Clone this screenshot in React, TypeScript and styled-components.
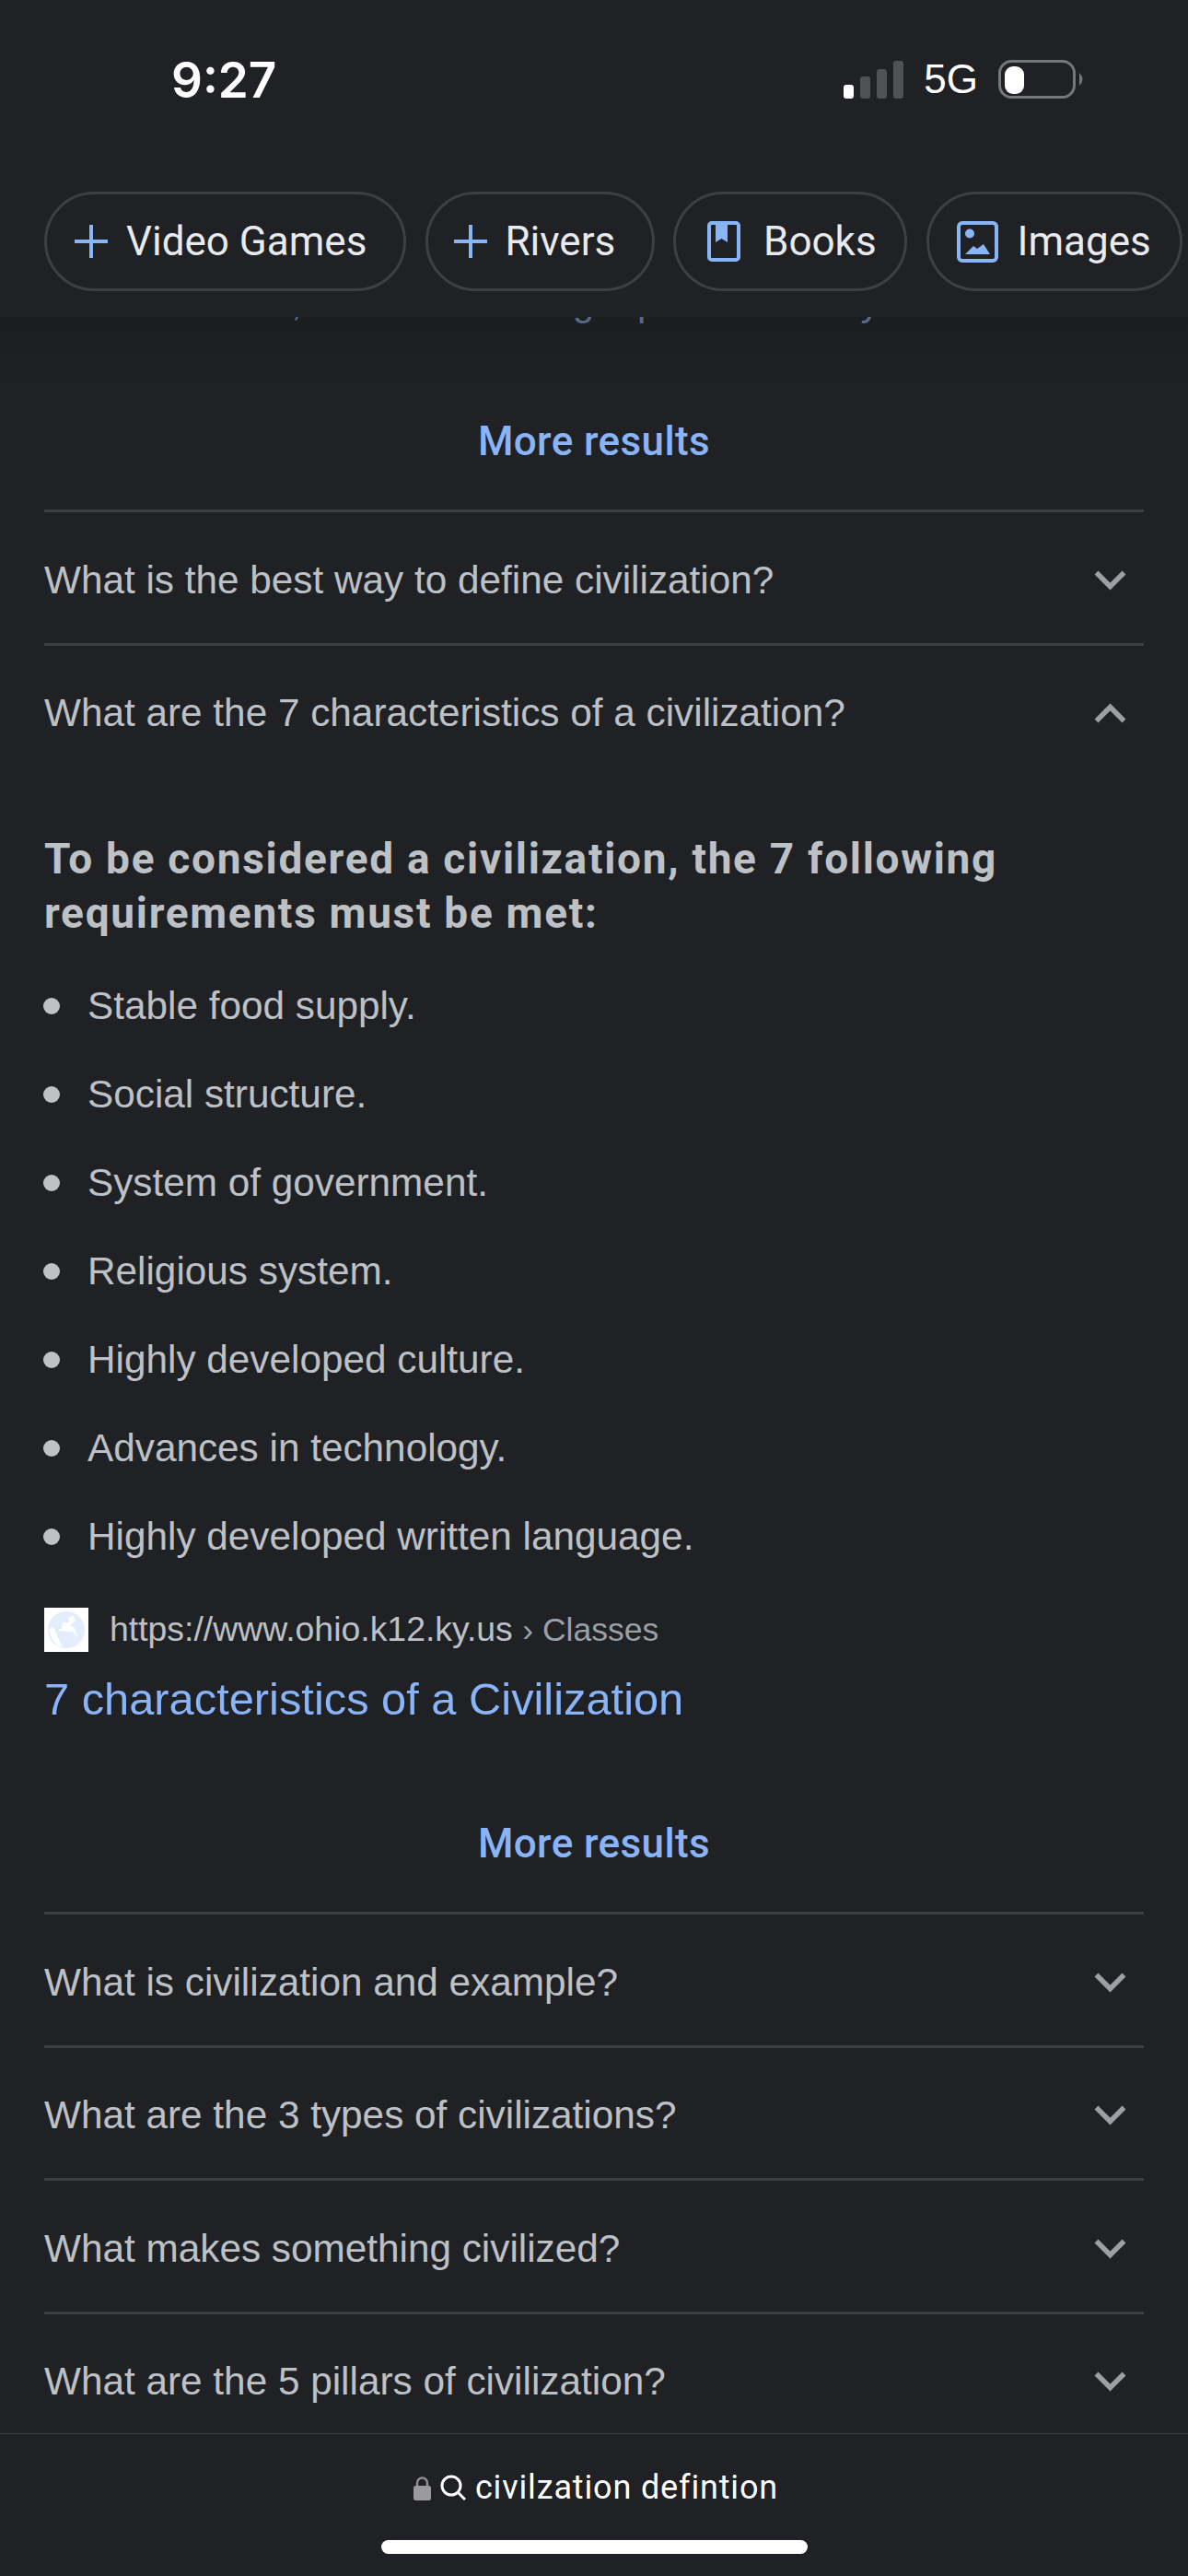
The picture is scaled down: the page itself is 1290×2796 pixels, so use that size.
import React from 'react'
import styled, { createGlobalStyle } from 'styled-components'

const GlobalStyle = createGlobalStyle`
  html, body {
    margin: 0;
    padding: 0;
    background: #202124;
  }
  * {
    box-sizing: border-box;
  }
`

const Page = styled.div`
  width: 1290px;
  height: 2796px;
  display: flex;
  flex-direction: column;
  overflow: hidden;
  background: #202124;
  font-family: 'Liberation Sans', Arial, sans-serif;
`

const Header = styled.header`
  height: 344px;
  flex: none;
  background: #202124;
`

const StatusBar = styled.div`
  height: 208px;
  display: flex;
  justify-content: space-between;
  align-items: flex-start;
  padding: 58px 113px 0 186px;
`

const Clock = styled.div`
  font-family: 'Inter', sans-serif;
  font-weight: 600;
  font-size: 53px;
  line-height: 58px;
  color: #fff;
`

const StatusIcons = styled.div`
  display: flex;
  align-items: center;
  gap: 22px;
  margin-top: 7px;
`

const NetworkLabel = styled.span`
  font-size: 44px;
  line-height: 42px;
  color: #fff;
`

const ChipRow = styled.div`
  display: flex;
  gap: 20.5px;
  padding-left: 48px;
`

const Chip = styled.div<{ $width: number; $pad: number; $gap: number }>`
  width: ${(p) => p.$width}px;
  height: 108px;
  flex: none;
  display: flex;
  align-items: center;
  gap: ${(p) => p.$gap}px;
  padding-left: ${(p) => p.$pad}px;
  border: 3px solid #3c4043;
  border-radius: 54px;
  font-family: 'Roboto', sans-serif;
  font-size: 44px;
  color: #e8eaed;
`

const Content = styled.main`
  flex: 1;
  min-height: 0;
  background: linear-gradient(#1c1d1f, #202124 80px);
`

const CutLine = styled.div`
  height: 7px;
  overflow: hidden;
  display: flex;
  align-items: flex-end;
  padding-left: 316px;
  font-size: 42px;
  line-height: 46px;
  color: #56698d;
`

const CutGlyph = styled.span<{ $offset: number }>`
  margin-left: ${(p) => p.$offset}px;
`

const Section = styled.div`
  padding: 0 48px;
`

const MoreResults = styled.div`
  height: 202px;
  display: flex;
  justify-content: center;
  align-items: flex-end;
  padding-bottom: 48px;
  font-family: 'Roboto', sans-serif;
  font-size: 44px;
  line-height: 52px;
  font-weight: 500;
  letter-spacing: 0.4px;
  color: #8ab4f8;
`

const Row = styled.div`
  height: 144.5px;
  display: flex;
  justify-content: space-between;
  align-items: center;
  padding: 6px 19px 0 0;
  border-top: 3px solid #3c4043;
  font-size: 42.3px;
  color: #bdc1c6;
`

const Answer = styled.div`
  padding-top: 61px;
`

const AnswerTitle = styled.h3`
  margin: 0 0 22.5px;
  font-family: 'Roboto', sans-serif;
  font-weight: 700;
  font-size: 46px;
  line-height: 59px;
  letter-spacing: 1.7px;
  color: #bdc1c6;
`

const BulletList = styled.ul`
  margin: 0;
  padding: 0;
  list-style: none;
`

const Bullet = styled.li`
  height: 96px;
  display: flex;
  align-items: center;
  gap: 30px;
  font-size: 42.3px;
  color: #bdc1c6;

  &::before {
    content: '';
    width: 18px;
    height: 18px;
    margin-left: -1px;
    border-radius: 50%;
    background: #bdc1c6;
  }
`

const SourceLine = styled.div`
  display: flex;
  align-items: center;
  gap: 23px;
  margin-top: 29px;
  font-size: 37.4px;
  color: #bdc1c6;
`

const Favicon = styled.div`
  width: 48px;
  height: 48px;
  display: flex;
  align-items: center;
  justify-content: center;
  background: #fff;
`

const Crumb = styled.span`
  font-size: 35.5px;
  color: #9aa0a6;
`

const ResultLink = styled.div`
  margin-top: 22.5px;
  font-size: 48.8px;
  line-height: 58px;
  color: #8ab4f8;
`

const BottomBar = styled.footer`
  height: 155px;
  flex: none;
  display: flex;
  flex-direction: column;
  align-items: center;
  padding-top: 35px;
  background: #202124;
  border-top: 1px solid #3c4043;
`

const AddressLine = styled.div`
  display: flex;
  align-items: center;
  gap: 10px;
  padding-left: 4px;
  font-family: 'Roboto', sans-serif;
  font-size: 36px;
  line-height: 46px;
  letter-spacing: 0.85px;
  color: #fff;
`

const HomeIndicator = styled.div`
  width: 463px;
  height: 15px;
  margin-top: 34px;
  border-radius: 8px;
  background: #fff;
`

function SignalIcon() {
  return (
    <svg width="65" height="41" viewBox="0 0 65 41">
      <rect x="0" y="26" width="11" height="15" rx="3" fill="#fff" />
      <rect x="18" y="17" width="11" height="24" rx="3" fill="#505154" />
      <rect x="36" y="9" width="11" height="32" rx="3" fill="#505154" />
      <rect x="54" y="0" width="11" height="41" rx="3" fill="#505154" />
    </svg>
  )
}

function BatteryIcon() {
  return (
    <svg width="93" height="42" viewBox="0 0 93 42">
      <rect x="1.5" y="1.5" width="81" height="39" rx="13" fill="none" stroke="#76777a" strokeWidth="3" />
      <rect x="7" y="7" width="21" height="30" rx="9" fill="#fff" />
      <path d="M88 14 Q95 21 88 28 Z" fill="#76777a" />
    </svg>
  )
}

function PlusIcon() {
  return (
    <svg width="36" height="36" viewBox="0 0 36 36">
      <path d="M18 0v36M0 18h36" stroke="#8ab4f8" strokeWidth="4" fill="none" />
    </svg>
  )
}

function BookIcon() {
  return (
    <svg width="36" height="44" viewBox="0 0 36 44">
      <rect x="2" y="2" width="32" height="40" rx="3" fill="none" stroke="#8ab4f8" strokeWidth="4" />
      <path d="M9 2h13v21l-6.500-4-6.500 4z" fill="#8ab4f8" />
    </svg>
  )
}

function ImageIcon() {
  return (
    <svg width="45" height="45" viewBox="0 0 45 45">
      <rect x="2" y="2" width="41" height="41" rx="4" fill="none" stroke="#8ab4f8" strokeWidth="4" />
      <circle cx="14" cy="13.500" r="5" fill="#8ab4f8" />
      <path d="M9 36l9-9 4 3 7-5 7 11z" fill="#8ab4f8" />
    </svg>
  )
}

function Chevron({ up }: { up?: boolean }) {
  return (
    <svg width="35" height="22" viewBox="0 0 35 22">
      <path
        d={up ? 'M2.500 19.500L17.500 4.500l15 15' : 'M2.500 2.500l15 15 15-15'}
        fill="none"
        stroke="#9aa0a6"
        strokeWidth="5.500"
      />
    </svg>
  )
}

function GlobeIcon() {
  return (
    <svg width="40" height="40" viewBox="0 0 40 40">
      <circle cx="20" cy="20" r="20" fill="#e3edfc" />
      <path d="M27 4l-5 4 1 4h-7l-1 6-4 3 16 1 5 6-3-10-5-3 6-5z" fill="#fff" />
      <path d="M1 19l5-2 7 16 3 6-6-2-6-8z" fill="#fff" />
    </svg>
  )
}

function LockIcon() {
  return (
    <svg width="19" height="27" viewBox="0 0 19 27">
      <path d="M4 13V8a5.500 5.500 0 0 1 11 0v5" fill="none" stroke="#8e8e93" strokeWidth="2.500" />
      <rect x="0" y="11" width="19" height="16" rx="2.500" fill="#9a9a9f" />
    </svg>
  )
}

function SearchIcon() {
  return (
    <svg width="28" height="28" viewBox="0 0 28 28">
      <circle cx="12" cy="12" r="10" fill="none" stroke="#fff" strokeWidth="3" />
      <path d="M19 19l8 8" stroke="#fff" strokeWidth="3" fill="none" />
    </svg>
  )
}

const bullets = [
  'Stable food supply.',
  'Social structure.',
  'System of government.',
  'Religious system.',
  'Highly developed culture.',
  'Advances in technology.',
  'Highly developed written language.',
]

const moreQuestions = [
  'What is civilization and example?',
  'What are the 3 types of civilizations?',
  'What makes something civilized?',
  'What are the 5 pillars of civilization?',
]

export default function App() {
  return (
    <>
      <GlobalStyle />
      <Page>
        <Header>
          <StatusBar>
            <Clock>9:27</Clock>
            <StatusIcons>
              <SignalIcon />
              <NetworkLabel>5G</NetworkLabel>
              <BatteryIcon />
            </StatusIcons>
          </StatusBar>
          <ChipRow>
            <Chip $width={393} $pad={30} $gap={20}>
              <PlusIcon />
              Video Games
            </Chip>
            <Chip $width={249} $pad={28} $gap={20}>
              <PlusIcon />
              Rivers
            </Chip>
            <Chip $width={254} $pad={34} $gap={25}>
              <BookIcon />
              Books
            </Chip>
            <Chip $width={278} $pad={30} $gap={21}>
              <ImageIcon />
              Images
            </Chip>
          </ChipRow>
        </Header>
        <Content>
          <CutLine>
            <CutGlyph $offset={0}>,</CutGlyph>
            <CutGlyph $offset={294}>g</CutGlyph>
            <CutGlyph $offset={47}>p</CutGlyph>
            <CutGlyph $offset={219}>y</CutGlyph>
          </CutLine>
          <Section>
            <MoreResults>More results</MoreResults>
            <Row>
              What is the best way to define civilization?
              <Chevron />
            </Row>
            <Row>
              What are the 7 characteristics of a civilization?
              <Chevron up />
            </Row>
            <Answer>
              <AnswerTitle>
                To be considered a civilization, the 7 following
                <br />
                requirements must be met:
              </AnswerTitle>
              <BulletList>
                {bullets.map((text) => (
                  <Bullet key={text}>{text}</Bullet>
                ))}
              </BulletList>
              <SourceLine>
                <Favicon>
                  <GlobeIcon />
                </Favicon>
                <span>
                  https://www.ohio.k12.ky.us <Crumb>› Classes</Crumb>
                </span>
              </SourceLine>
              <ResultLink>7 characteristics of a Civilization</ResultLink>
            </Answer>
            <MoreResults>More results</MoreResults>
            {moreQuestions.map((text) => (
              <Row key={text}>
                {text}
                <Chevron />
              </Row>
            ))}
          </Section>
        </Content>
        <BottomBar>
          <AddressLine>
            <LockIcon />
            <SearchIcon />
            civilzation defintion
          </AddressLine>
          <HomeIndicator />
        </BottomBar>
      </Page>
    </>
  )
}
